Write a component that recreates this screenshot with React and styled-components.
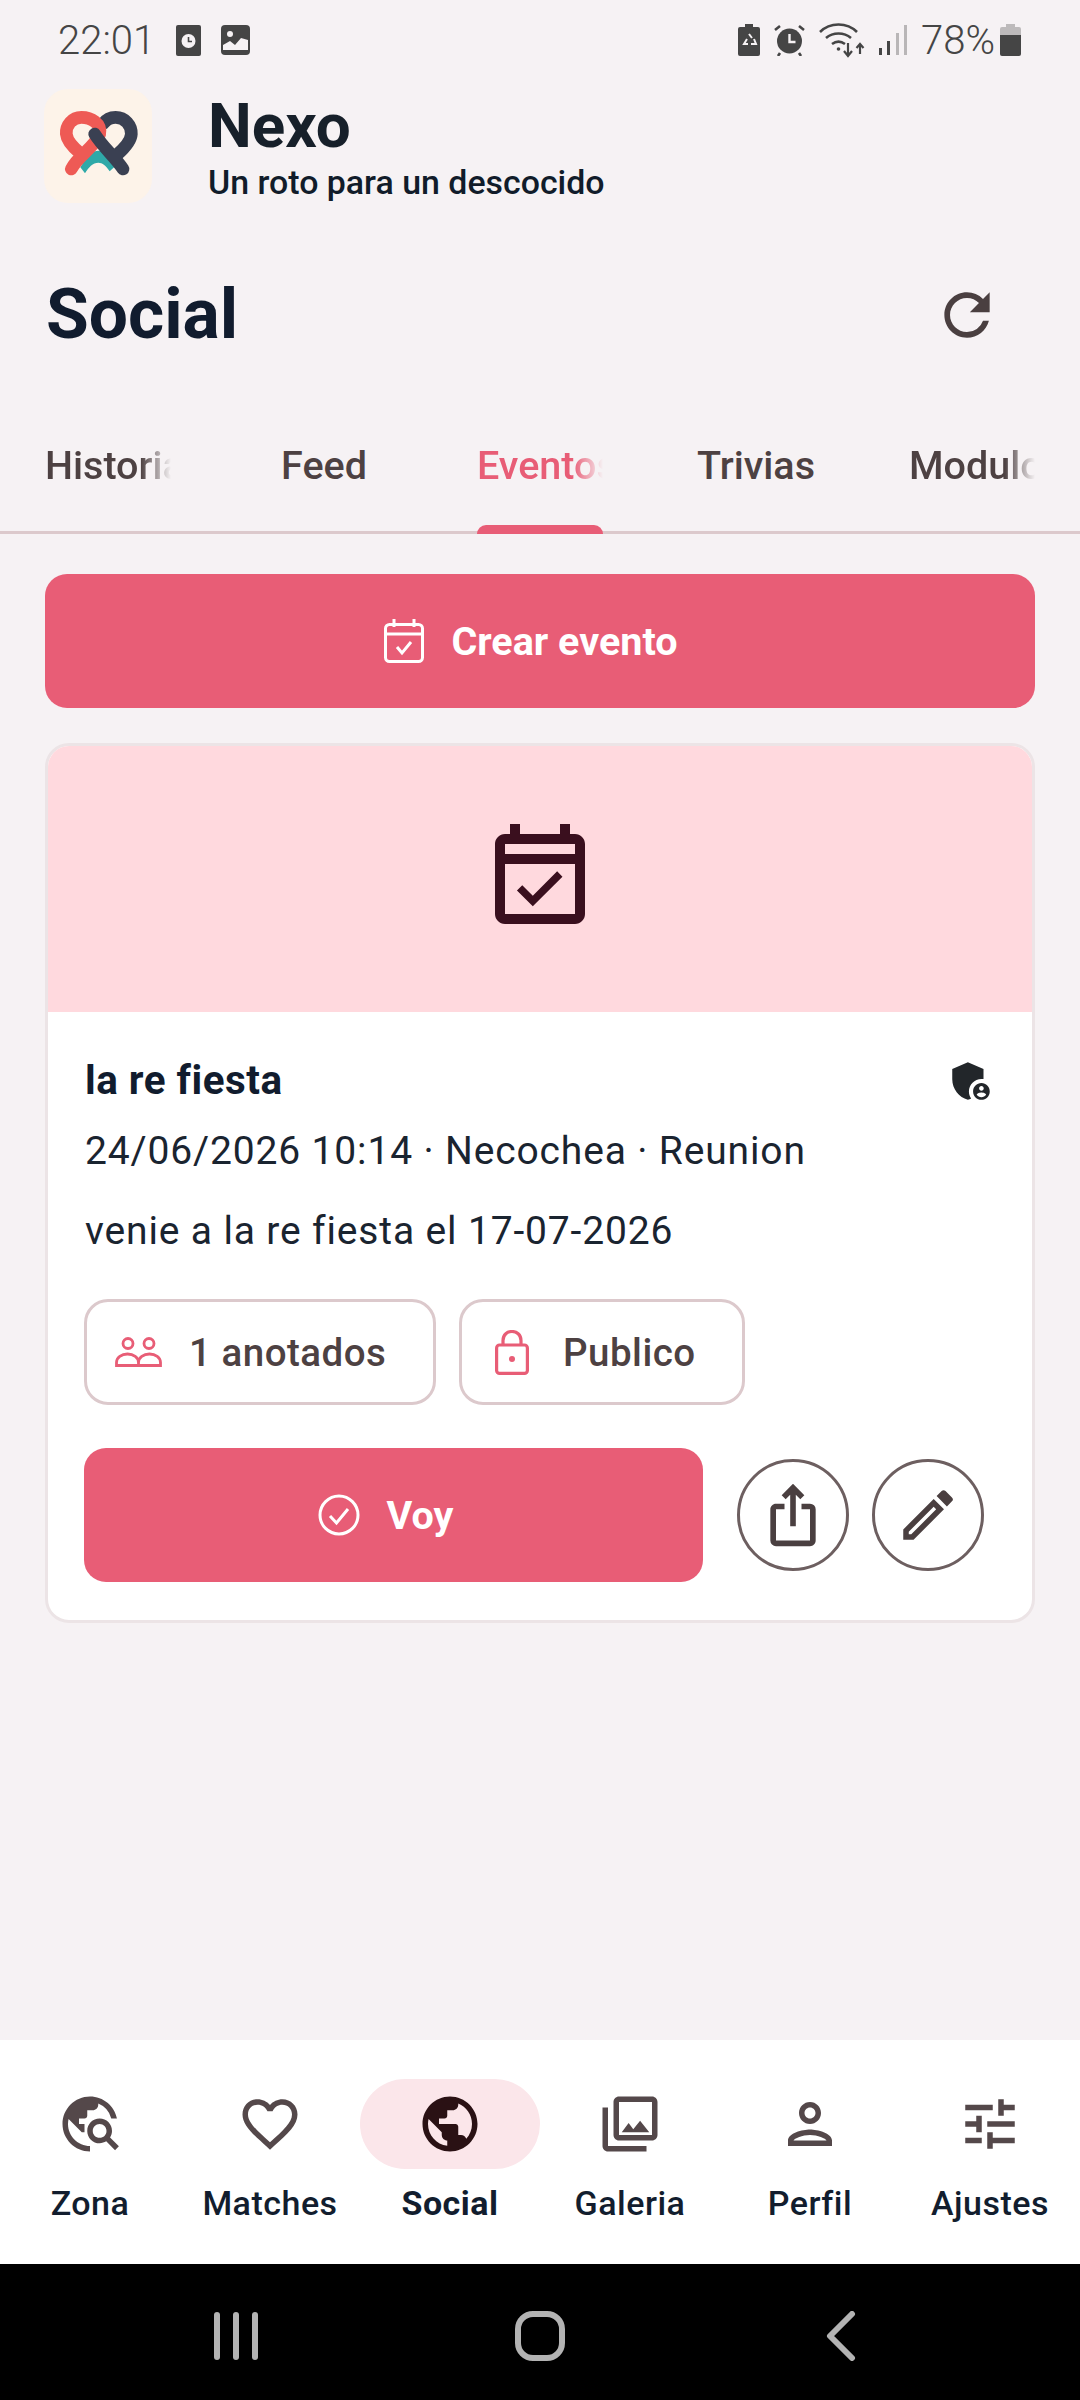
import React from "react";
import styled, { createGlobalStyle } from "styled-components";
import {
  MdRefresh, MdOutlineEventAvailable, MdAdminPanelSettings,
  MdIosShare, MdOutlineEdit, MdTravelExplore,
  MdFavoriteBorder, MdPublic, MdOutlinePhotoLibrary, MdOutlinePerson, MdOutlineTune,
} from "react-icons/md";

const Global = createGlobalStyle`
  html, body { margin: 0; padding: 0; background: #f6f2f4; }
  * { box-sizing: border-box; }
  body { font-family: Roboto, "Liberation Sans", sans-serif; }
`;
const Page = styled.div`
  width: 1080px; height: 2400px; display: flex; flex-direction: column; background: #f6f2f4; overflow: hidden;
`;
const StatusBar = styled.div`
  height: 80px; padding: 0 59px 0 58px; display: flex; align-items: center; color: #454545;
  font-size: 40px; font-weight: 300; flex: none;
`;
const StatusGroup = styled.div`
  display: flex; align-items: center; gap: ${p => p.$gap || 0}px; margin-left: ${p => p.$ml || 0}px;
`;
const Spacer = styled.div` flex: 1; `;
const AppHeader = styled.header`
  height: 124px; flex: none; padding: 9px 0 0 44px; display: flex; align-items: flex-start; gap: 56px;
`;
const Logo = styled.div`
  width: 108px; height: 114px; border-radius: 24px; background: #fdf3e9; flex: none;
  display: flex; align-items: center; justify-content: center;
`;
const Brand = styled.div` display: flex; flex-direction: column; padding-top: 4px; `;
const BrandName = styled.div`
  font-size: 62px; font-weight: 700; color: #17202a; line-height: 66px;
`;
const Tagline = styled.div`
  font-size: 33.9px; font-weight: 500; color: #111c2a; line-height: 36px; margin-top: 6px;
`;
const TitleRow = styled.div`
  height: 110px; flex: none; margin-top: 56px; padding: 0 44px 0 46px; display: flex; align-items: center; justify-content: space-between;
`;
const Title = styled.h1`
  margin: 0; font-size: 69.5px; font-weight: 700; color: #111c2e; line-height: 1;
`;
const RefreshWrap = styled.div`
  width: 68px; height: 68px; margin-right: 35px; color: #4a3f40; display: flex;
`;
const Tabs = styled.nav`
  display: grid; grid-template-columns: repeat(5, 216px); height: 112px; margin-top: 52px; flex: none;
  border-bottom: 3px solid #dcc9cc;
`;
const Tab = styled.div`
  position: relative; display: flex; justify-content: center; padding-top: 22px;
`;
const TabLabel = styled.div`
  width: ${p => p.$fade ? "126px" : "auto"}; overflow: hidden; white-space: nowrap; font-size: 39.5px; font-weight: 500; line-height: 44px;
  color: ${p => p.$active ? "#e85d76" : "#4d4142"};
  ${p => p.$fade ? "-webkit-mask-image: linear-gradient(90deg, #000 76%, transparent 100%); mask-image: linear-gradient(90deg, #000 76%, transparent 100%);" : ""}
`;
const TabIndicator = styled.div`
  position: absolute; bottom: -3px; left: 45px; width: 126px; height: 9px; background: #e85d76; border-radius: 9px 9px 0 0;
`;
const Content = styled.main`
  flex: 1; padding: 40px 45px 0; display: flex; flex-direction: column; gap: 35px; min-height: 0;
`;
const PrimaryButton = styled.button`
  border: 0; background: #e85d76; color: #fff; border-radius: 22px; height: 134px; display: flex; align-items: center; justify-content: center;
  gap: 27px; font-family: inherit; font-size: 39.5px; font-weight: 700; padding: 0 ${p => p.$pr}px 0 0; width: ${p => p.$w || "auto"}; flex: none;
`;
const Card = styled.article`
  background: #fff; border: 3px solid #ece4e6; border-radius: 24px; overflow: hidden; height: 880px; flex: none;
`;
const CardHero = styled.div`
  height: 266px; background: #ffd9de; display: flex; align-items: center; justify-content: center; color: #3a0f1e;
`;
const CardBody = styled.div` padding: 46px 36px 0; display: flex; flex-direction: column; `;
const CardTitleRow = styled.div` display: flex; align-items: center; justify-content: space-between; height: 46px; `;
const CardTitle = styled.div` font-size: 40.4px; font-weight: 700; color: #111c2e; line-height: 46px; letter-spacing: .5px; margin-left: 1px; `;
const Meta = styled.div`
  font-size: 39px; font-weight: 400; color: #1a2430; line-height: 46px; margin-top: ${p => p.$mt}px; letter-spacing: .85px; margin-left: 1px;
`;
const ChipRow = styled.div` display: flex; gap: 23px; margin-top: 45px; `;
const Chip = styled.div`
  height: 106px; width: ${p => p.$w}px; border: 3px solid #dcc9cc; border-radius: 24px; display: flex; align-items: center; padding-left: ${p => p.$pl}px;
  gap: ${p => p.$gap}px; font-size: 38.5px; font-weight: 500; color: #4d4142; letter-spacing: .5px;
`;
const ChipIcon = styled.span` color: #e85d76; display: flex; `;
const Actions = styled.div` display: flex; align-items: center; margin-top: 43px; `;
const CircleButton = styled.button`
  width: 112px; height: 112px; border-radius: 50%; border: 3px solid #6d5f60; background: #fff; color: #4a3f40; padding: 0;
  display: flex; align-items: center; justify-content: center; margin-left: ${p => p.$ml}px; flex: none;
`;
const BottomNav = styled.nav`
  height: 224px; flex: none; background: #fff; display: grid; grid-template-columns: repeat(6, 180px);
`;
const NavItem = styled.div` display: flex; flex-direction: column; align-items: center; padding-top: 39px; `;
const NavPill = styled.div`
  width: 180px; height: 90px; border-radius: 45px; background: ${p => p.$active ? "#fbe6ea" : "transparent"};
  display: flex; align-items: center; justify-content: center; color: ${p => p.$active ? "#2a1114" : "#54484a"};
`;
const NavLabel = styled.div`
  font-size: 34px; font-weight: ${p => p.$active ? 700 : 500}; color: #121d2e; line-height: 40px; margin-top: 14px; letter-spacing: .5px;
`;
const SystemBar = styled.div`
  height: 136px; flex: none; background: #000; display: grid; grid-template-columns: repeat(3, 1fr); padding-top: 8px; align-items: center; justify-items: center;
`;
const SysSlot = styled.div` display: flex; margin: ${p => p.$m}; `;

const LogoMark = () => (
  <svg width="108" height="114" viewBox="13 15 324 342" fill="none">
    <path d="M122 250 C140 218 158 200 176 200 C196 200 216 216 234 240 L210 262 C200 246 188 236 176 236 C160 236 146 250 136 268Z" fill="#2fa9a8" />
    <path d="M192 118 C200 106 212 100 228 100 C256 100 276 124 275 150 C274 172 255 192 232 212" stroke="#3a4052" strokeWidth="38" strokeLinecap="round" />
    <path d="M95 255 C115 215 165 190 180 150 C186 118 155 100 125 100 C98 100 78 124 80 150 C82 172 100 190 122 208" stroke="#ee5a55" strokeWidth="38" strokeLinecap="round" />
    <path d="M250 255 C225 218 190 190 165 150" stroke="#3a4052" strokeWidth="38" strokeLinecap="round" />
  </svg>
);
const ClockNote = () => (
  <svg width="25" height="31" viewBox="0 0 25 31"><rect width="25" height="31" rx="2" fill="#454545"/><circle cx="12.5" cy="16" r="7" fill="#f6f2f4"/><path d="M12.5 12v4.500h3.500" stroke="#454545" strokeWidth="1.600" fill="none"/></svg>
);
const PicNote = () => (
  <svg width="29" height="30" viewBox="0 0 29 30"><rect width="29" height="30" rx="4" fill="#454545"/><circle cx="9" cy="9" r="3" fill="#f6f2f4"/><path d="M2 25v-5l7-4 5 4 6-7 7 2v10z" fill="#f6f2f4"/></svg>
);
const BatterySaver = () => (
  <svg width="22" height="32" viewBox="0 0 22 32"><path d="M7 0h8v3h5a2 2 0 0 1 2 2v25a2 2 0 0 1-2 2H2a2 2 0 0 1-2-2V5a2 2 0 0 1 2-2h5z" fill="#454545"/><path d="M11 10l3 4M9 15l-3 5h4M16 15l2 5h-5" stroke="#f6f2f4" strokeWidth="2" fill="none"/></svg>
);
const Alarm = () => (
  <svg width="31" height="32" viewBox="0 0 31 32"><circle cx="15.500" cy="17" r="12.500" fill="#454545"/><path d="M1 6l5-4M30 6l-5-4M6 29l-2 3M25 29l2 3" stroke="#454545" strokeWidth="2.600"/><path d="M15.500 10v8h6" stroke="#f6f2f4" strokeWidth="2.400" fill="none"/></svg>
);
const Wifi = () => (
  <svg width="46" height="35" viewBox="0 0 46 35" fill="none" stroke="#454545" strokeWidth="2.600"><path d="M1 9C11-1 28-1 38 9M7 15c7-6 18-6 25 0M13 21c4-3 9-3 13 0"/><circle cx="19.500" cy="26" r="1.800" fill="#454545" stroke="none"/><path d="M29 20v12M25 28l4 5 4-5M41 31V21M37.500 25l3.500-4 3.500 4" strokeWidth="2.200"/></svg>
);
const Signal = () => (
  <svg width="28" height="30" viewBox="0 0 28 30"><rect x="0" y="23" width="3" height="7" fill="#454545"/><rect x="8" y="16" width="3" height="14" fill="#454545"/><rect x="17" y="8" width="3" height="22" fill="#b9b6b7"/><rect x="25" y="0" width="3" height="30" fill="#b9b6b7"/></svg>
);
const Battery = () => (
  <svg width="21" height="32" viewBox="0 0 21 32"><path d="M6 0h9v3h4a2 2 0 0 1 2 2v6H0V5a2 2 0 0 1 2-2h4z" fill="#bdbabb"/><path d="M0 11h21v19a2 2 0 0 1-2 2H2a2 2 0 0 1-2-2z" fill="#454545"/></svg>
);
const CalendarCheckThin = () => (
  <svg width="40" height="44" viewBox="0 0 40 44" fill="none" stroke="#fff" strokeWidth="3"><rect x="1.500" y="5.500" width="37" height="37" rx="4"/><path d="M1.500 15h37" /><path d="M10 0v8M30 0v8" /><path d="M13 28l5 6 9-11"/></svg>
);
const PeopleThin = () => (
  <svg width="47" height="30" viewBox="0 0 47 30" fill="none" stroke="currentColor" strokeWidth="2.800"><circle cx="13" cy="6.500" r="5"/><circle cx="34" cy="6.500" r="5"/><path d="M1.500 28.500v-3c0-5 5-8.500 11-8.500s11 3.500 11 8.500v3zM23.500 25.500c0-5 5-8.500 11-8.500s11 3.500 11 8.500v3H23.500"/></svg>
);
const LockThin = () => (
  <svg width="34" height="45" viewBox="0 0 34 45" fill="none" stroke="currentColor" strokeWidth="3.200"><rect x="1.600" y="15" width="30.800" height="28.400" rx="3"/><path d="M8 15V10.500c0-12 18-12 18 0V15"/><circle cx="17" cy="29" r="3" fill="currentColor" stroke="none"/></svg>
);
const CheckCircleThin = () => (
  <svg width="42" height="42" viewBox="0 0 42 42" fill="none" stroke="#fff" strokeWidth="3"><circle cx="21" cy="21" r="19"/><path d="M12 22l6.500 7L30 15"/></svg>
);

const navItems = [
  ["Zona", MdTravelExplore], ["Matches", MdFavoriteBorder], ["Social", MdPublic, true],
  ["Galeria", MdOutlinePhotoLibrary], ["Perfil", MdOutlinePerson], ["Ajustes", MdOutlineTune],
];
const tabs = [["Historias", true], ["Feed"], ["Eventos", true, true], ["Trivias"], ["Modulos", true]];

export default function App() {
  return (
    <Page>
      <Global />
      <StatusBar>
        <span>22:01</span>
        <StatusGroup $gap={20} $ml={21}><ClockNote /><PicNote /></StatusGroup>
        <Spacer />
        <StatusGroup $gap={14}><BatterySaver /><Alarm /><Wifi /><Signal /></StatusGroup>
        <StatusGroup $gap={5} $ml={14}><span>78%</span><Battery /></StatusGroup>
      </StatusBar>
      <AppHeader>
        <Logo><LogoMark /></Logo>
        <Brand>
          <BrandName>Nexo</BrandName>
          <Tagline>Un roto para un descocido</Tagline>
        </Brand>
      </AppHeader>
      <TitleRow>
        <Title>Social</Title>
        <RefreshWrap><MdRefresh size={68} /></RefreshWrap>
      </TitleRow>
      <Tabs>
        {tabs.map(([label, fade, active]) => (
          <Tab key={label}>
            <TabLabel $fade={fade} $active={active}>{label}</TabLabel>
            {active && <TabIndicator />}
          </Tab>
        ))}
      </Tabs>
      <Content>
        <PrimaryButton $pr={18}><CalendarCheckThin />Crear evento</PrimaryButton>
        <Card>
          <CardHero><MdOutlineEventAvailable size={120} /></CardHero>
          <CardBody>
            <CardTitleRow>
              <CardTitle>la re fiesta</CardTitle>
              <MdAdminPanelSettings size={50} color="#22262a" />
            </CardTitleRow>
            <Meta $mt={24}>24/06/2026 10:14 · Necochea · Reunion</Meta>
            <Meta $mt={34}>venie a la re fiesta el 17-07-2026</Meta>
            <ChipRow>
              <Chip $w={352} $pl={28} $gap={27}><ChipIcon><PeopleThin /></ChipIcon>1 anotados</Chip>
              <Chip $w={286} $pl={33} $gap={34}><ChipIcon><LockThin /></ChipIcon>Publico</Chip>
            </ChipRow>
            <Actions>
              <PrimaryButton $w="619px" $pr={16}><CheckCircleThin />Voy</PrimaryButton>
              <CircleButton $ml={34}><MdIosShare size={68} /></CircleButton>
              <CircleButton $ml={23}><MdOutlineEdit size={66} /></CircleButton>
            </Actions>
          </CardBody>
        </Card>
      </Content>
      <BottomNav>
        {navItems.map(([label, Icon, active]) => (
          <NavItem key={label}>
            <NavPill $active={active}><Icon size={66} /></NavPill>
            <NavLabel $active={active}>{label}</NavLabel>
          </NavItem>
        ))}
      </BottomNav>
      <SystemBar>
        <SysSlot $m="0 0 0 112px">
          <svg width="44" height="48" viewBox="0 0 44 48" fill="#b3b3b3"><rect x="0" y="0" width="6" height="48" rx="3"/><rect x="19" y="0" width="6" height="48" rx="3"/><rect x="38" y="0" width="6" height="48" rx="3"/></svg>
        </SysSlot>
        <SysSlot $m="0">
          <svg width="50" height="50" viewBox="0 0 50 50" fill="none" stroke="#b3b3b3" strokeWidth="6"><rect x="3" y="3" width="44" height="44" rx="15"/></svg>
        </SysSlot>
        <SysSlot $m="0 118px 0 0">
          <svg width="30" height="50" viewBox="0 0 30 50" fill="none" stroke="#b3b3b3" strokeWidth="6" strokeLinecap="round" strokeLinejoin="round"><path d="M26 3L4 25l22 22"/></svg>
        </SysSlot>
      </SystemBar>
    </Page>
  );
}
